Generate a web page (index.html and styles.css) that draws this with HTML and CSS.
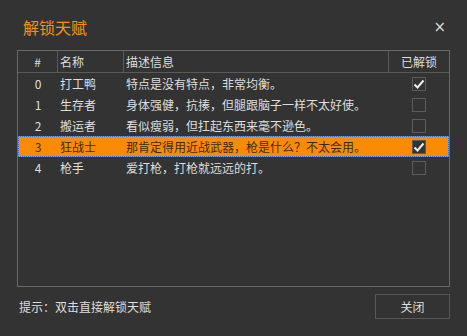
FILE: index.html
```html
<!DOCTYPE html>
<html lang="zh">
<head>
<meta charset="utf-8">
<title>解锁天赋</title>
<link rel="stylesheet" href="styles.css">
</head>
<body>
<div class="window">
  <div class="titlebar">
    <span class="title">解锁天赋</span>
    <span class="close">×</span>
  </div>
  <div class="table">
    <div class="row head">
      <div class="cell c-num">#</div>
      <div class="cell c-name">名称</div>
      <div class="cell c-desc">描述信息</div>
      <div class="cell c-chk">已解锁</div>
    </div>
    <div class="row">
      <div class="cell c-num">0</div>
      <div class="cell c-name">打工鸭</div>
      <div class="cell c-desc">特点是没有特点，非常均衡。</div>
      <div class="cell c-chk"><span class="box"><svg viewBox="0 0 14 14" width="14" height="14"><polyline points="2.5,7.5 5.5,10.5 11.5,3.5" fill="none" stroke="#ececec" stroke-width="2"/></svg></span></div>
    </div>
    <div class="row">
      <div class="cell c-num">1</div>
      <div class="cell c-name">生存者</div>
      <div class="cell c-desc">身体强健，抗揍，但腿跟脑子一样不太好使。</div>
      <div class="cell c-chk"><span class="box"></span></div>
    </div>
    <div class="row">
      <div class="cell c-num">2</div>
      <div class="cell c-name">搬运者</div>
      <div class="cell c-desc">看似瘦弱，但扛起东西来毫不逊色。</div>
      <div class="cell c-chk"><span class="box"></span></div>
    </div>
    <div class="row selected">
      <div class="cell c-num">3</div>
      <div class="cell c-name">狂战士</div>
      <div class="cell c-desc">那肯定得用近战武器，枪是什么？不太会用。</div>
      <div class="cell c-chk"><span class="box checked"><svg viewBox="0 0 14 14" width="14" height="14"><polyline points="2.5,7.5 5.5,10.5 11.5,3.5" fill="none" stroke="#ececec" stroke-width="2"/></svg></span></div>
    </div>
    <div class="row">
      <div class="cell c-num">4</div>
      <div class="cell c-name">枪手</div>
      <div class="cell c-desc">爱打枪，打枪就远远的打。</div>
      <div class="cell c-chk"><span class="box"></span></div>
    </div>
  </div>
  <div class="footer">
    <span class="hint">提示：双击直接解锁天赋</span>
    <button class="btn">关闭</button>
  </div>
</div>
</body>
</html>
```
FILE: styles.css
```css
html, body {
  margin: 0;
  padding: 0;
  background: #333333;
}
.window {
  width: 467px;
  height: 336px;
  box-sizing: border-box;
  background: #333333;
  font-family: "Noto Sans CJK SC", "Noto Sans", sans-serif;
  font-size: 12px;
  color: #dedede;
  display: flex;
  flex-direction: column;
}
.titlebar {
  height: 50px;
  box-sizing: border-box;
  padding: 18px 21px 0 23px;
  display: flex;
  justify-content: space-between;
  align-items: flex-start;
}
.title {
  font-size: 16px;
  line-height: 18px;
  color: #f7930c;
}
.close {
  font-family: "DejaVu Sans", sans-serif;
  font-size: 15px;
  line-height: 18px;
  color: #d8d8d8;
}
.table {
  margin-left: 17px;
  width: 433px;
  height: 237px;
  box-sizing: border-box;
  border: 1px solid #686868;
}
.row {
  display: grid;
  grid-template-columns: 40px 66px 265px 60px;
  height: 21px;
  align-items: center;
}
.row.head {
  height: 22px;
  border-bottom: 1px solid #5a5a5a;
  box-sizing: border-box;
  align-items: stretch;
}
.row.head .cell {
  display: flex;
  align-items: center;
  border-right: 1px solid #5a5a5a;
}
.row.head .cell:last-child {
  border-right: none;
}
.row.head .c-num, .row.head .c-chk {
  justify-content: center;
}
.cell {
  line-height: 21px;
  white-space: nowrap;
  overflow: hidden;
}
.c-num {
  text-align: center;
}
.c-name {
  padding-left: 2px;
}
.c-desc {
  padding-left: 2px;
}
.c-chk {
  display: flex;
  justify-content: center;
  align-items: center;
  height: 21px;
}
.row.head .c-name, .row.head .c-desc {
  padding-left: 2px;
}
.row.selected {
  background: #fb8b05;
  color: #3a2c14;
  outline: 1px dotted #3d6fc4;
  outline-offset: -1px;
}
.box {
  width: 14px;
  height: 14px;
  box-sizing: border-box;
  border: 1px solid #5c5c5c;
  display: flex;
  align-items: center;
  justify-content: center;
}
.box svg {
  display: block;
  flex: none;
}
.box.checked {
  background: #333333;
}
.footer {
  margin-top: 7px;
  padding: 0 17px 0 19px;
  display: flex;
  justify-content: space-between;
  align-items: center;
}
.hint {
  line-height: 20px;
}
.btn {
  width: 75px;
  height: 25px;
  background: #333333;
  border: 1px solid #585858;
  color: #dedede;
  font-family: "Noto Sans CJK SC", "Noto Sans", sans-serif;
  font-size: 12px;
  padding: 0;
  margin: 0;
}
```
